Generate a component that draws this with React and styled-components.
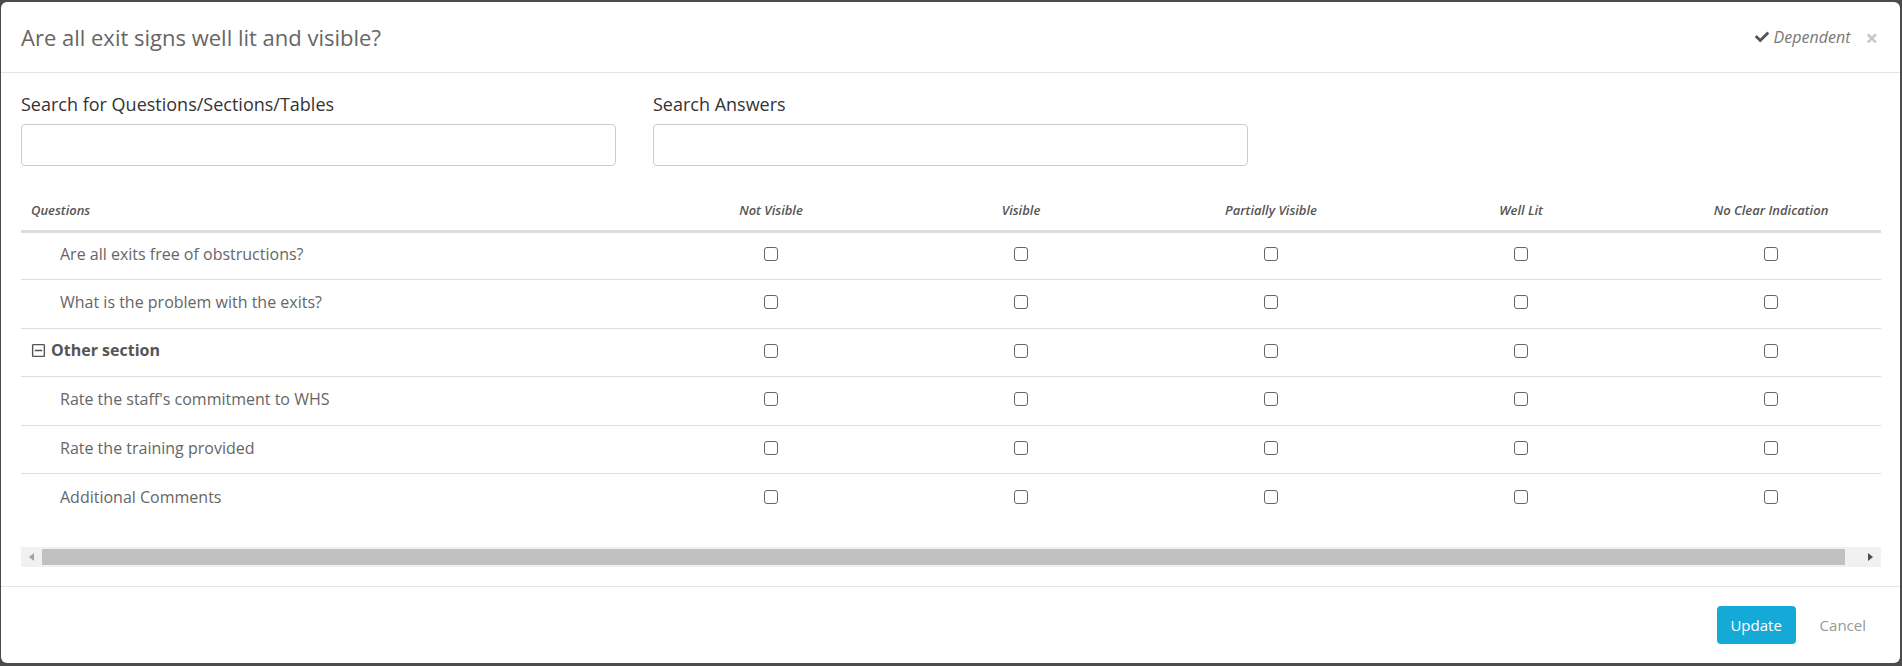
import React, { useState } from "react";
import styled, { createGlobalStyle } from "styled-components";
import { FaCheck, FaRegMinusSquare } from "react-icons/fa";

const GlobalStyle = createGlobalStyle`
    html, body {
        margin: 0;
        padding: 0;
        background: #4b4b4b;
        font-family: "Open Sans", "Noto Sans", sans-serif;
    }
    * { box-sizing: border-box; }
`;

const answers = [
    "Not Visible",
    "Visible",
    "Partially Visible",
    "Well Lit",
    "No Clear Indication",
];

const rows = [
    { label: "Are all exits free of obstructions?" },
    { label: "What is the problem with the exits?" },
    { label: "Other section", section: true },
    { label: "Rate the staff's commitment to WHS" },
    { label: "Rate the training provided" },
    { label: "Additional Comments" },
];

const App = () => {
    const [checked, setChecked] = useState({});

    const toggle = (r, c) => {
        const key = r + "-" + c;
        setChecked({ ...checked, [key]: !checked[key] });
    };

    return (
        <>
            <GlobalStyle />
            <Modal>
                <Header>
                    <Title>Are all exit signs well lit and visible?</Title>
                    <Dependent>
                        <FaCheck size={14} color="#555" />
                        <span>Dependent</span>
                    </Dependent>
                    <Close>×</Close>
                </Header>

                <Body>
                    <SearchRow>
                        <Field>
                            <Label>Search for Questions/Sections/Tables</Label>
                            <Input type="text" />
                        </Field>
                        <Field>
                            <Label>Search Answers</Label>
                            <Input type="text" />
                        </Field>
                    </SearchRow>

                    <TableWrap>
                        <Table>
                            <colgroup>
                                <col style={{ width: 625 }} />
                                {answers.map((a) => (
                                    <col key={a} style={{ width: 250 }} />
                                ))}
                            </colgroup>
                            <thead>
                                <tr>
                                    <Th $left>Questions</Th>
                                    {answers.map((a) => (
                                        <Th key={a}>{a}</Th>
                                    ))}
                                </tr>
                            </thead>
                            <tbody>
                                {rows.map((row, r) => (
                                    <Tr key={row.label}>
                                        <QuestionCell $section={row.section}>
                                            {row.section ? (
                                                <SectionName>
                                                    <FaRegMinusSquare size={15} color="#555" />
                                                    {row.label}
                                                </SectionName>
                                            ) : (
                                                row.label
                                            )}
                                        </QuestionCell>
                                        {answers.map((a, c) => (
                                            <Td key={a}>
                                                <Checkbox
                                                    type="checkbox"
                                                    checked={!!checked[r + "-" + c]}
                                                    onChange={() => toggle(r, c)}
                                                />
                                            </Td>
                                        ))}
                                    </Tr>
                                ))}
                            </tbody>
                        </Table>
                    </TableWrap>

                    <ScrollBar>
                        <ScrollButton>
                            <Arrow $dir="left" />
                        </ScrollButton>
                        <Thumb />
                        <ScrollButton>
                            <Arrow $dir="right" />
                        </ScrollButton>
                    </ScrollBar>
                </Body>

                <Footer>
                    <PrimaryButton>Update</PrimaryButton>
                    <LinkButton>Cancel</LinkButton>
                </Footer>
            </Modal>
        </>
    );
};

const Modal = styled.div`
    margin: 2px 2px 3px 1px;
    height: 661px;
    background: #fff;
    border-radius: 6px;
    display: flex;
    flex-direction: column;
    overflow: hidden;
`;

const Header = styled.div`
    height: 71px;
    padding: 0 22px 0 20px;
    display: flex;
    align-items: center;
    border-bottom: 1px solid #e5e5e5;
`;

const Title = styled.h4`
    margin: 0;
    flex: 1;
    font-size: 22px;
    font-weight: 400;
    color: #666;
`;

const Dependent = styled.div`
    display: flex;
    align-items: center;
    gap: 5px;
    font-size: 16px;
    font-style: italic;
    color: #777;
`;

const Close = styled.span`
    margin-left: 15px;
    font-size: 22px;
    font-weight: 700;
    line-height: 1;
    color: #c6c6c6;
    cursor: pointer;
`;

const Body = styled.div`
    padding: 19px 20px 19px;
`;

const SearchRow = styled.div`
    display: grid;
    grid-template-columns: 595px 595px;
    column-gap: 37px;
`;

const Field = styled.div`
    display: flex;
    flex-direction: column;
`;

const Label = styled.label`
    font-size: 18px;
    line-height: 24px;
    color: #333;
    margin-bottom: 8px;
`;

const Input = styled.input`
    height: 42px;
    border: 1px solid #ccc;
    border-radius: 4px;
    padding: 6px 12px;
    font-family: inherit;
    font-size: 15px;
`;

const TableWrap = styled.div`
    margin-top: 19px;
    width: 1860px;
    overflow: hidden;
`;

const Table = styled.table`
    width: 1875px;
    table-layout: fixed;
    border-collapse: collapse;
`;

const Th = styled.th`
    height: 46px;
    padding: 5px 10px 0;
    font-size: 13px;
    font-style: italic;
    font-weight: 600;
    color: #555;
    text-align: ${(p) => (p.$left ? "left" : "center")};
    border-bottom: 3px solid #ddd;
`;

const Tr = styled.tr`
    height: 48.5px;
    border-bottom: 1px solid #ddd;

    &:last-child {
        border-bottom: none;
    }
`;

const Td = styled.td`
    padding: 0 0 3px;
    text-align: center;
    vertical-align: middle;
`;

const QuestionCell = styled.td`
    padding: 0 0 3px ${(p) => (p.$section ? "10px" : "39px")};
    font-size: 16px;
    color: #666;
    vertical-align: middle;
`;

const SectionName = styled.span`
    display: inline-flex;
    align-items: center;
    gap: 5px;
    font-weight: 700;
    color: #555;
`;

const Checkbox = styled.input`
    appearance: none;
    display: block;
    width: 14px;
    height: 14px;
    margin: 0 auto;
    border: 1.5px solid #666;
    border-radius: 3px;
    background: #fff;
    cursor: pointer;

    &:checked {
        background: #666;
    }
`;

const ScrollBar = styled.div`
    margin-top: 25px;
    height: 20px;
    width: 1860px;
    background: #f1f1f1;
    display: flex;
    align-items: center;
`;

const ScrollButton = styled.div`
    width: 21px;
    height: 20px;
    display: flex;
    align-items: center;
    justify-content: center;
`;

const Arrow = styled.span`
    width: 0;
    height: 0;
    border-top: 4.5px solid transparent;
    border-bottom: 4.5px solid transparent;
    ${(p) =>
        p.$dir === "left"
            ? "border-right: 5px solid #a3a3a3;"
            : "border-left: 5px solid #505050;"}
`;

const Thumb = styled.div`
    width: 1803px;
    height: 16px;
    margin-right: 15px;
    background: #c1c1c1;
`;

const Footer = styled.div`
    flex: 1;
    border-top: 1px solid #e5e5e5;
    display: flex;
    justify-content: flex-end;
    align-items: center;
    padding-right: 22px;
`;

const PrimaryButton = styled.button`
    width: 79px;
    height: 38px;
    border: none;
    border-radius: 4px;
    background: #14a9d6;
    color: #fff;
    font-family: inherit;
    font-size: 15px;
    cursor: pointer;
`;

const LinkButton = styled.button`
    margin-left: 12px;
    padding: 0 12px;
    height: 38px;
    border: none;
    background: none;
    color: #999;
    font-family: inherit;
    font-size: 15px;
    cursor: pointer;
`;

export default App;
